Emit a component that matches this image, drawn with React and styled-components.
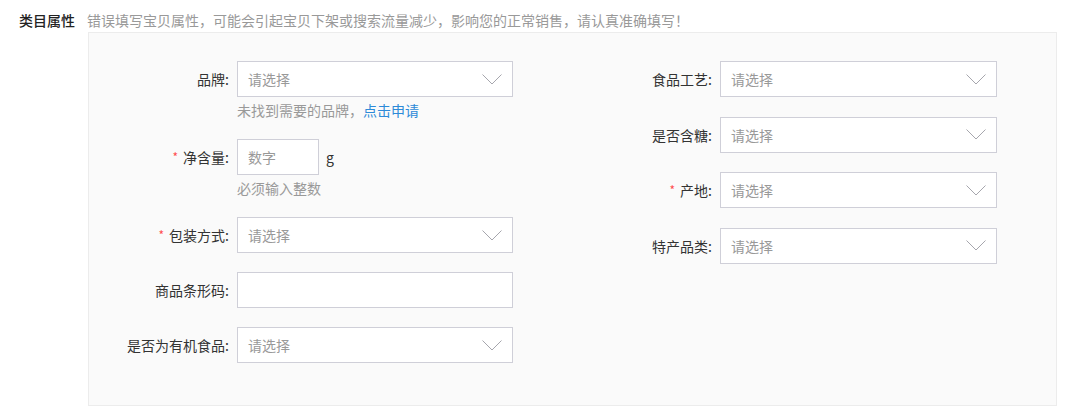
import React from "react";
import styled, { createGlobalStyle } from "styled-components";

const GlobalStyle = createGlobalStyle`
  html, body { margin: 0; padding: 0; background: #fff; }
  body {
    font-family: "Noto Sans CJK SC", "Noto Sans", "Liberation Sans", sans-serif;
    font-size: 14px;
    color: #333;
  }
  * { box-sizing: border-box; }
`;

const Section = styled.section`
  width: 1080px;
  padding-top: 10px;
`;

const Header = styled.div`
  display: grid;
  grid-template-columns: 87px 1fr;
  height: 22px;
  line-height: 20px;
`;

const Title = styled.div`
  padding-left: 19px;
  color: #222;
  font-size: 14px;
  font-weight: 500;
`;

const Tip = styled.div`
  color: #999;
  font-size: 14px;
`;

const Panel = styled.div`
  margin-left: 88px;
  width: 969px;
  border: 1px solid #ececec;
  background: #fafafa;
  padding: 28px 0 42px 0;
  display: grid;
  grid-template-columns: 424px 425px;
  column-gap: 59px;
  align-items: start;
`;

const Column = styled.div`
  display: flex;
  flex-direction: column;
  gap: ${(p) => p.$gap || 19}px;
`;

const Item = styled.div`
  display: flex;
  flex-direction: column;
`;

const Row = styled.div`
  display: flex;
  align-items: center;
  height: 36px;
`;

const Label = styled.label`
  width: 148px;
  padding-right: 8px;
  text-align: right;
  color: #333;
  font-size: 14px;
  white-space: nowrap;
  flex: none;
`;

const Star = styled.span`
  color: #ff4d4f;
  font-size: 12px;
  margin-right: 5px;
  vertical-align: 1px;
`;

const Box = styled.div`
  width: ${(p) => p.$w || 276}px;
  height: 36px;
  border: 1px solid #cfcfd8;
  background: #fff;
  display: flex;
  align-items: center;
  justify-content: space-between;
  padding: 0 10px 0 10px;
  flex: none;
`;

const Placeholder = styled.span`
  color: #999;
  font-size: 14px;
`;

const Unit = styled.span`
  margin-left: 7px;
  color: #333;
  font-size: 14px;
`;

const Help = styled.div`
  margin-left: 148px;
  margin-top: 3px;
  line-height: 20px;
  color: #999;
  font-size: 14px;
`;

const Link = styled.a`
  color: #2d8ad8;
  text-decoration: none;
`;

const Chevron = () => (
  <svg width="20" height="11" viewBox="0 0 20 11" fill="none">
    <polyline points="0.5,0.5 10,10 19.5,0.5" stroke="#a6a6ad" strokeWidth="1" />
  </svg>
);

const Select = ({ w }) => (
  <Box $w={w}>
    <Placeholder>请选择</Placeholder>
    <Chevron />
  </Box>
);

const Field = ({ label, required, children, help }) => (
  <Item>
    <Row>
      <Label>
        {required && <Star>*</Star>}
        {label}:
      </Label>
      {children}
    </Row>
    {help && <Help>{help}</Help>}
  </Item>
);

export default function App() {
  return (
    <>
      <GlobalStyle />
      <Section>
        <Header>
          <Title>类目属性</Title>
          <Tip>错误填写宝贝属性，可能会引起宝贝下架或搜索流量减少，影响您的正常销售，请认真准确填写！</Tip>
        </Header>
        <Panel>
          <Column $gap={19}>
            <Field
              label="品牌"
              help={
                <>
                  未找到需要的品牌，<Link href="#">点击申请</Link>
                </>
              }
            >
              <Select />
            </Field>
            <Field label="净含量" required help="必须输入整数">
              <Box $w={82}>
                <Placeholder>数字</Placeholder>
              </Box>
              <Unit>g</Unit>
            </Field>
            <Field label="包装方式" required>
              <Select />
            </Field>
            <Field label="商品条形码">
              <Box />
            </Field>
            <Field label="是否为有机食品">
              <Select />
            </Field>
          </Column>
          <Column $gap={19.5}>
            <Field label="食品工艺">
              <Select w={277} />
            </Field>
            <Field label="是否含糖">
              <Select w={277} />
            </Field>
            <Field label="产地" required>
              <Select w={277} />
            </Field>
            <Field label="特产品类">
              <Select w={277} />
            </Field>
          </Column>
        </Panel>
      </Section>
    </>
  );
}
